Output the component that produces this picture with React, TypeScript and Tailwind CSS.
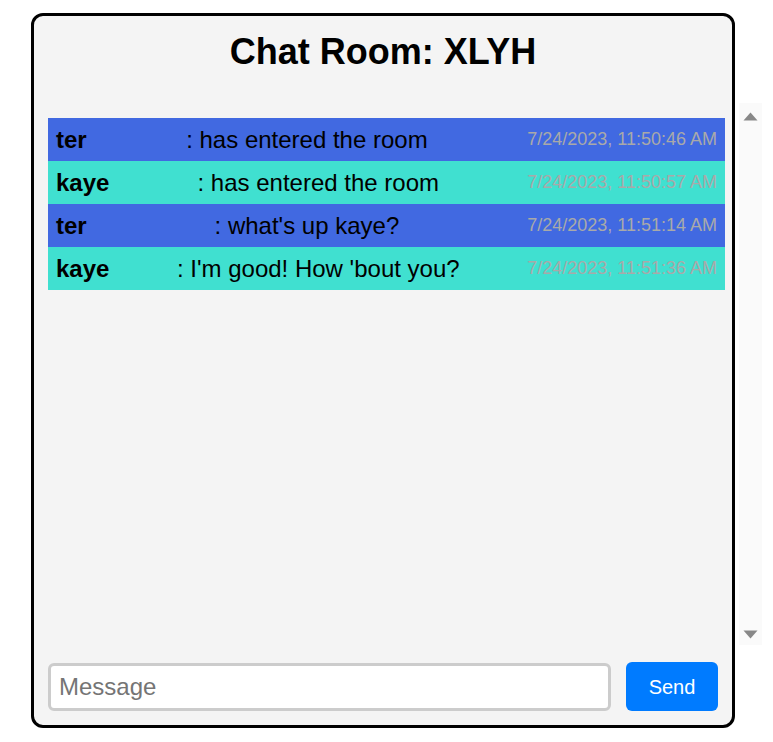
import React from "react";

const messages = [
  { user: "ter", text: ": has entered the room", time: "7/24/2023, 11:50:46 AM", bg: "bg-[#4169e1]" },
  { user: "kaye", text: ": has entered the room", time: "7/24/2023, 11:50:57 AM", bg: "bg-[#40e0d0]" },
  { user: "ter", text: ": what's up kaye?", time: "7/24/2023, 11:51:14 AM", bg: "bg-[#4169e1]" },
  { user: "kaye", text: ": I'm good! How 'bout you?", time: "7/24/2023, 11:51:36 AM", bg: "bg-[#40e0d0]" },
];

export default function App() {
  return (
    <div className="min-h-[742px] bg-white pt-[13px] font-['Liberation_Sans',Arial,sans-serif] text-black">
      <div className="ml-[31px] w-[704px] rounded-[12px] border-[3px] border-black bg-[#f4f4f4] px-[14px] pt-[15px] pb-[14px]">
        <h1 className="h-[41px] text-center text-[36px] font-bold leading-[41px]">Chat Room: XLYH</h1>
        <div className="mt-[31px] flex h-[542px] w-[714px]">
          <div className="w-[677px] shrink-0 pt-[15px]">
            {messages.map((m, i) => (
              <div key={i} className={`flex h-[43px] items-center justify-between px-[8px] ${m.bg}`}>
                <span className="text-[24px] font-bold">{m.user}</span>
                <span className="text-[24px]">{m.text}</span>
                <span className="text-[18px] text-[#a9a9a9]">{m.time}</span>
              </div>
            ))}
          </div>
          <div className="ml-[14px] flex w-[23px] shrink-0 flex-col items-center justify-between bg-[#fafafa] pt-[9px] pb-[6px]">
            <svg width="15" height="9" viewBox="0 0 15 9">
              <path d="M7.5 0.5 L14.5 8.5 L0.5 8.5 Z" fill="#888888" />
            </svg>
            <svg width="15" height="9" viewBox="0 0 15 9">
              <path d="M0.5 0.5 L14.5 0.5 L7.5 8.5 Z" fill="#888888" />
            </svg>
          </div>
        </div>
        <div className="mt-[17px] flex h-[49px] items-center gap-[15px]">
          <input
            placeholder="Message"
            className="h-[48px] min-w-0 flex-1 rounded-[6px] border-[3px] border-[#cccccc] bg-white px-[8px] text-[24px] outline-none placeholder:text-[#757575]"
          />
          <button className="h-[49px] w-[92px] shrink-0 rounded-[6px] bg-[#007bff] text-[20px] text-white">Send</button>
        </div>
      </div>
    </div>
  );
}
